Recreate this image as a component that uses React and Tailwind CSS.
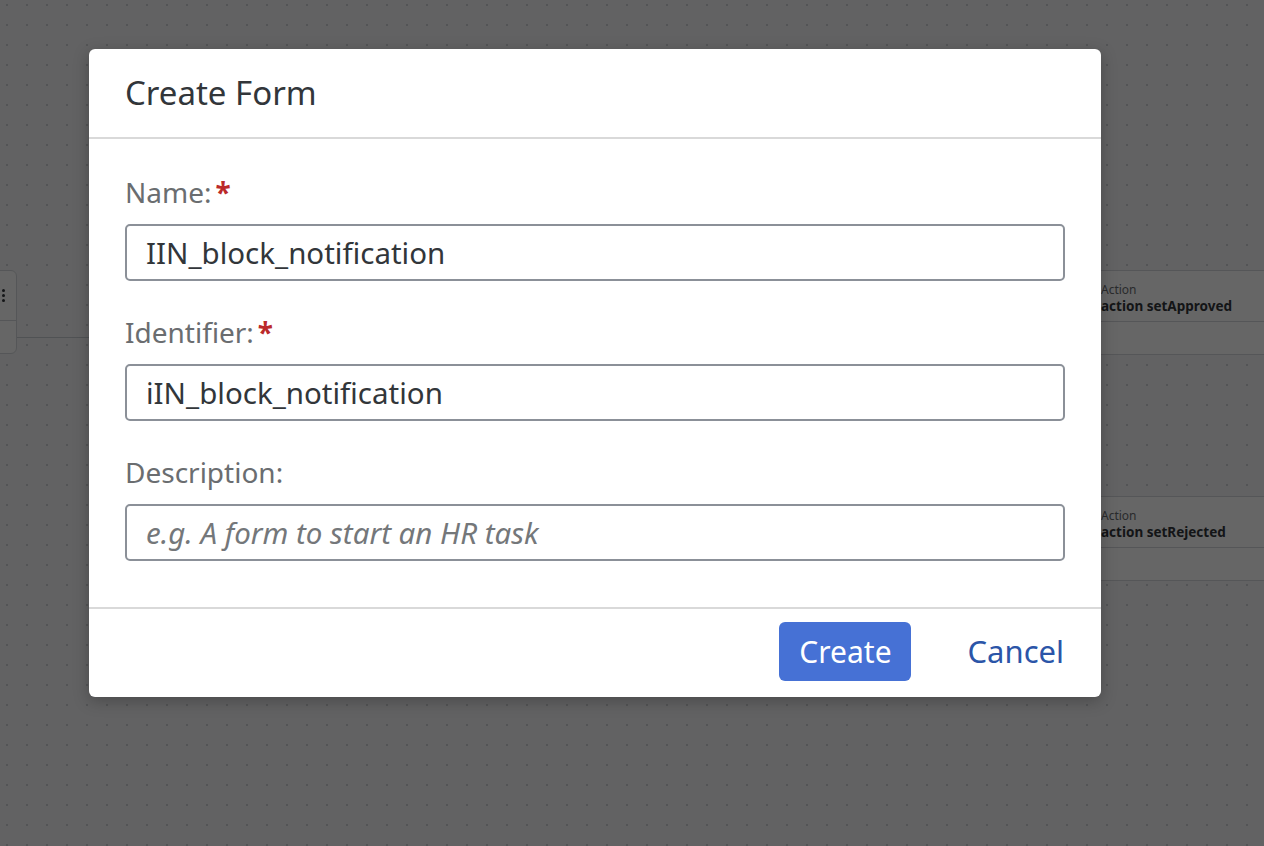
import React from 'react';

const fieldInput =
  'w-full h-[57px] rounded-[5px] border-2 border-[#8b9098] bg-white px-[19px] text-[29.5px] text-[#32363a] outline-none';

function CanvasNode({ className, title, name }) {
  return (
    <div className={`absolute w-[260px] h-[85px] rounded-[6px] border border-[#d5d8dc] bg-white ${className}`}>
      <div className="h-[51px] border-b border-[#d5d8dc] pl-[60px] pt-[12px]">
        <div className="text-[12px] leading-[14px] text-[#6a6d70]">{title}</div>
        <div className="text-[13.5px] leading-[18px] font-bold text-[#32363a]">{name}</div>
      </div>
    </div>
  );
}

export default function App() {
  return (
    <div className="relative h-[846px] w-[1264px] overflow-hidden bg-[#f5f6f7] bg-[radial-gradient(circle,#cfd2d6_1.2px,transparent_1.4px)] bg-[length:20px_20px] bg-[position:-3px_-5px] font-['Noto_Sans','Open_Sans',sans-serif]">
      {/* canvas behind the dialog */}
      <div className="absolute left-[-240px] top-[270px] w-[257px] h-[84px] rounded-[6px] border border-[#d5d8dc] bg-white">
        <div className="h-[50px] border-b border-[#d5d8dc]" />
        <div className="absolute left-[241px] top-[18px] flex flex-col gap-[2px]">
          <span className="block h-[3px] w-[3px] rounded-full bg-[#32363a]" />
          <span className="block h-[3px] w-[3px] rounded-full bg-[#32363a]" />
          <span className="block h-[3px] w-[3px] rounded-full bg-[#32363a]" />
        </div>
      </div>
      <div className="absolute left-[17px] top-[337px] h-px w-[120px] bg-[#c9cdd2]" />
      <CanvasNode className="left-[1040px] top-[270px]" title="Action" name="action setApproved" />
      <CanvasNode className="left-[1040px] top-[496px]" title="Action" name="action setRejected" />

      {/* dimming overlay */}
      <div className="absolute inset-0 bg-black/60" />

      {/* dialog */}
      <div className="absolute left-[89px] top-[49px] w-[1012px] rounded-[6px] bg-white shadow-[0_4px_16px_rgba(0,0,0,0.25)]">
        <div className="flex h-[90px] items-center border-b-2 border-[#d9d9d9] px-[36px]">
          <h1 className="text-[33px] text-[#32363a]">Create Form</h1>
        </div>

        <div className="px-[36px] pt-[33px] pb-[46px]">
          <label className="flex h-[40px] items-center text-[28px] text-[#6a6d70]">
            Name:<span className="ml-[4px] font-bold text-[#bb2a2a]">*</span>
          </label>
          <input className={`${fieldInput} mt-[12px]`} defaultValue="IIN_block_notification" />

          <label className="mt-[31px] flex h-[40px] items-center text-[28px] text-[#6a6d70]">
            Identifier:<span className="ml-[4px] font-bold text-[#bb2a2a]">*</span>
          </label>
          <input className={`${fieldInput} mt-[12px]`} defaultValue="iIN_block_notification" />

          <label className="mt-[31px] flex h-[40px] items-center text-[28px] text-[#6a6d70]">
            Description:
          </label>
          <input
            className={`${fieldInput} mt-[12px] placeholder:italic placeholder:text-[#74777a]`}
            placeholder="e.g. A form to start an HR task"
          />
        </div>

        <div className="flex h-[90px] items-center justify-end gap-[56px] border-t-2 border-[#d9d9d9] pr-[37px] pb-[3px]">
          <button className="h-[59px] w-[132px] rounded-[6px] bg-[#4671d5] text-[30px] text-white">Create</button>
          <button className="text-[31px] text-[#2b55a8]">Cancel</button>
        </div>
      </div>
    </div>
  );
}
